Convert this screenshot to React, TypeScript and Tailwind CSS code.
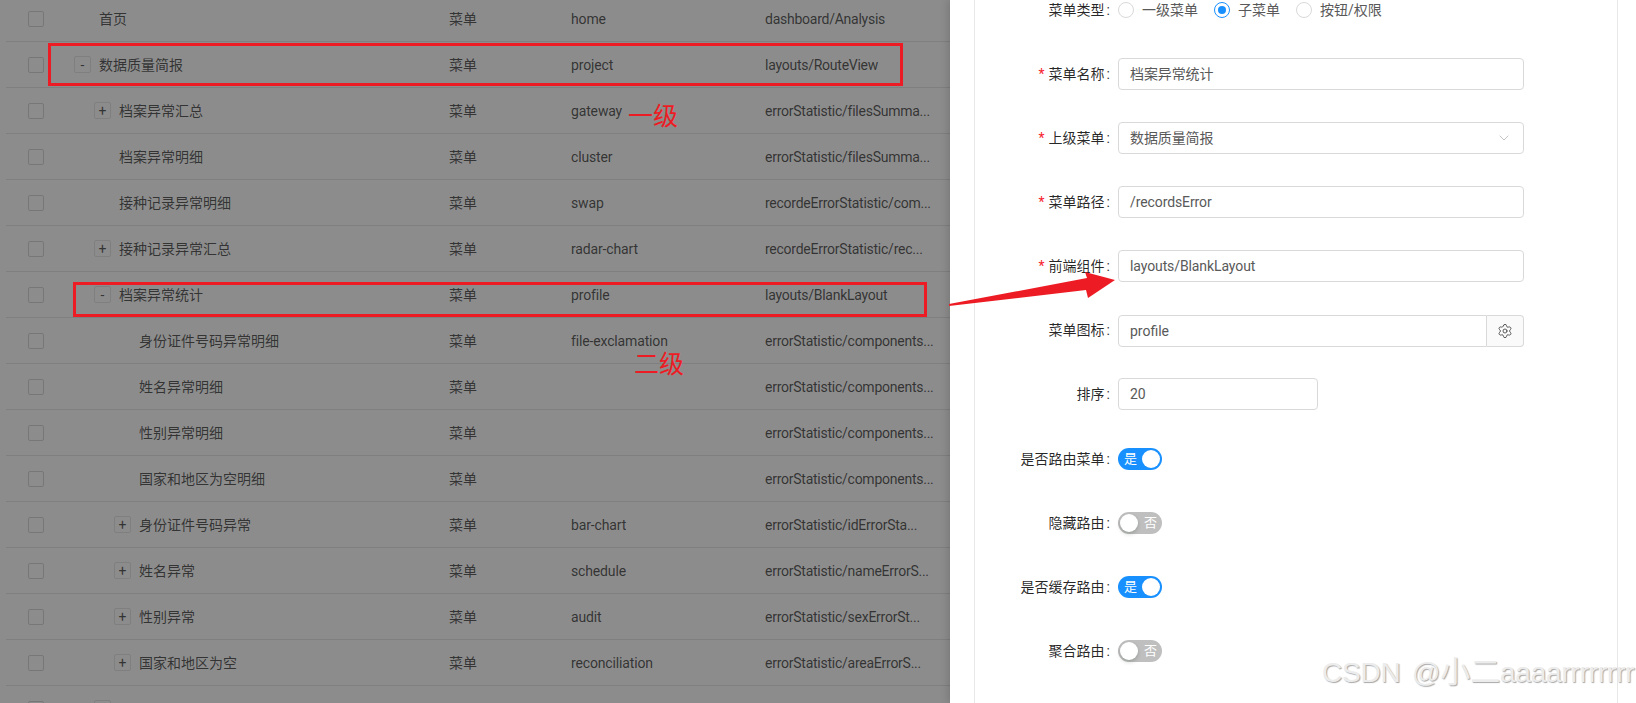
import React from "react";
import { ChevronDown, Settings } from "lucide-react";

type MenuRow = {
  name: string;
  level: number;
  expand?: string;
  icon: string;
  component: string;
};

const rows: MenuRow[] = [
  { name: "首页", level: 0, icon: "home", component: "dashboard/Analysis" },
  { name: "数据质量简报", level: 0, expand: "-", icon: "project", component: "layouts/RouteView" },
  { name: "档案异常汇总", level: 1, expand: "+", icon: "gateway", component: "errorStatistic/filesSumma..." },
  { name: "档案异常明细", level: 1, icon: "cluster", component: "errorStatistic/filesSumma..." },
  { name: "接种记录异常明细", level: 1, icon: "swap", component: "recordeErrorStatistic/com..." },
  { name: "接种记录异常汇总", level: 1, expand: "+", icon: "radar-chart", component: "recordeErrorStatistic/rec..." },
  { name: "档案异常统计", level: 1, expand: "-", icon: "profile", component: "layouts/BlankLayout" },
  { name: "身份证件号码异常明细", level: 2, icon: "file-exclamation", component: "errorStatistic/components..." },
  { name: "姓名异常明细", level: 2, icon: "", component: "errorStatistic/components..." },
  { name: "性别异常明细", level: 2, icon: "", component: "errorStatistic/components..." },
  { name: "国家和地区为空明细", level: 2, icon: "", component: "errorStatistic/components..." },
  { name: "身份证件号码异常", level: 2, expand: "+", icon: "bar-chart", component: "errorStatistic/idErrorSta..." },
  { name: "姓名异常", level: 2, expand: "+", icon: "schedule", component: "errorStatistic/nameErrorS..." },
  { name: "性别异常", level: 2, expand: "+", icon: "audit", component: "errorStatistic/sexErrorSt..." },
  { name: "国家和地区为空", level: 2, expand: "+", icon: "reconciliation", component: "errorStatistic/areaErrorS..." },
  // only the top of this row is on screen
  { name: "", level: 1, expand: " ", icon: "", component: "" },
];

function TableRow({ row }: { row: MenuRow }) {
  return (
    <div className="grid h-[46px] grid-cols-[68px_375px_122px_194px_185px] items-center border-b border-[#e8e8e8]">
      <div className="pl-[22px]">
        <div className="h-4 w-4 rounded-[2px] border border-[#d9d9d9] bg-white" />
      </div>
      <div className={`flex items-center ${row.level === 1 ? "pl-5" : row.level === 2 ? "pl-10" : ""}`}>
        {row.expand ? (
          <span className="mr-2 flex h-[17px] w-[17px] items-center justify-center rounded-[2px] border border-[#e8e8e8] text-sm leading-none">
            {row.expand}
          </span>
        ) : (
          <span className="mr-2 h-[17px] w-[17px]" />
        )}
        <span>{row.name}</span>
      </div>
      <div>{row.name ? "菜单" : ""}</div>
      <div className="tracking-[-0.15px]">{row.icon}</div>
      <div className="whitespace-nowrap tracking-[-0.25px]">{row.component}</div>
    </div>
  );
}

function FormRow({ label, required, children }: { label: string; required?: boolean; children: React.ReactNode }) {
  return (
    <div className="flex h-16 items-center">
      <div className="w-[143px] shrink-0 pr-[8px] text-right text-[rgba(0,0,0,0.85)]">
        {required && <span className="mr-1 text-[#f5222d]">*</span>}
        {label}
        <span className="ml-[2px]">:</span>
      </div>
      <div className="min-w-0 flex-1">{children}</div>
    </div>
  );
}

function Radio({ label, checked }: { label: string; checked?: boolean }) {
  return (
    <span className="mr-4 inline-flex items-center">
      <span
        className={`flex h-4 w-4 items-center justify-center rounded-full border bg-white ${
          checked ? "border-[#1890ff]" : "border-[#d9d9d9]"
        }`}
      >
        {checked && <span className="h-2 w-2 rounded-full bg-[#1890ff]" />}
      </span>
      <span className="ml-2 text-[#595959]">{label}</span>
    </span>
  );
}

function Switch({ on }: { on?: boolean }) {
  return (
    <div
      className={`flex h-[22px] w-11 items-center justify-between rounded-full px-[2px] text-[13px] text-white ${
        on ? "bg-[#1890ff]" : "bg-[#bfbfbf]"
      }`}
    >
      {on ? (
        <>
          <span className="pl-[4px]">是</span>
          <span className="h-[18px] w-[18px] rounded-full bg-white" />
        </>
      ) : (
        <>
          <span className="h-[18px] w-[18px] rounded-full bg-white shadow-[0_2px_4px_rgba(0,35,11,0.2)]" />
          <span className="pr-[3px]">否</span>
        </>
      )}
    </div>
  );
}

const inputClass = "flex h-8 items-center rounded border border-[#d9d9d9] bg-white px-[11px] text-[#595959] tracking-[-0.1px]";

export default function App() {
  return (
    <div className="relative flex h-[703px] w-[1636px] overflow-hidden bg-white font-['Roboto','Noto_Sans_CJK_SC',sans-serif] text-sm text-[rgba(0,0,0,0.65)]">
      {/* table behind the drawer mask */}
      <div className="relative h-full w-[950px] shrink-0 overflow-hidden">
        <div className="-mt-[4px] ml-[6px]">
          {rows.map((row, i) => (
            <TableRow key={i} row={row} />
          ))}
        </div>
        <div className="absolute inset-0 bg-[rgba(0,0,0,0.45)]" />
      </div>

      {/* drawer */}
      <div className="z-10 h-full flex-1 overflow-hidden bg-white pl-6 pr-[18px] shadow-[-2px_0_8px_rgba(0,0,0,0.15)]">
        <div className="h-full overflow-hidden border-x border-[#e8e8e8]">
          <div className="-mt-[22px] w-[552px]">
            <FormRow label="菜单类型">
              <div className="flex items-center">
                <Radio label="一级菜单" />
                <Radio label="子菜单" checked />
                <Radio label="按钮/权限" />
              </div>
            </FormRow>
            <FormRow label="菜单名称" required>
              <div className={`${inputClass} w-[406px]`}>档案异常统计</div>
            </FormRow>
            <FormRow label="上级菜单" required>
              <div className={`${inputClass} w-[406px] justify-between`}>
                <span>数据质量简报</span>
                <ChevronDown size={16} strokeWidth={1} className="text-[#a6a6a6]" />
              </div>
            </FormRow>
            <FormRow label="菜单路径" required>
              <div className={`${inputClass} w-[406px]`}>/recordsError</div>
            </FormRow>
            <FormRow label="前端组件" required>
              <div className={`${inputClass} w-[406px]`}>layouts/BlankLayout</div>
            </FormRow>
            <FormRow label="菜单图标">
              <div className="flex h-8 w-[406px] translate-y-px">
                <div className="flex flex-1 items-center rounded-l border border-[#d9d9d9] px-[11px] text-[#595959]">profile</div>
                <div className="flex w-[37px] items-center justify-center rounded-r border border-l-0 border-[#d9d9d9] bg-[#fafafa]">
                  <Settings size={16} strokeWidth={1.25} className="text-[#404040]" />
                </div>
              </div>
            </FormRow>
            <FormRow label="排序">
              <div className={`${inputClass} w-[200px]`}>20</div>
            </FormRow>
            <div className="mt-px">
              <FormRow label="是否路由菜单">
                <Switch on />
              </FormRow>
              <FormRow label="隐藏路由">
                <Switch />
              </FormRow>
              <FormRow label="是否缓存路由">
                <Switch on />
              </FormRow>
              <FormRow label="聚合路由">
                <Switch />
              </FormRow>
            </div>
          </div>
        </div>
      </div>

      {/* red annotations pasted on top of the screenshot */}
      <div className="absolute left-[48px] top-[43px] z-20 h-[43px] w-[855px] border-[3px] border-[#ed1c24]" />
      <div className="absolute left-[73px] top-[282px] z-20 h-[35px] w-[854px] border-[3px] border-[#ed1c24]" />
      <div className="absolute left-[628px] top-[102px] z-20 font-['Noto_Sans_CJK_SC',sans-serif] text-[25px] leading-[24px] text-[#ed1c24]">一级</div>
      <div className="absolute left-[634px] top-[350px] z-20 font-['Noto_Sans_CJK_SC',sans-serif] text-[25px] leading-[24px] text-[#ed1c24]">二级</div>
      <svg className="absolute left-0 top-0 z-20" width="1636" height="703">
        <polygon points="949,304 1087,278 1085,272 1115,280 1088,298 1086,290 949,306" fill="#ed1c24" />
      </svg>
      <div className="absolute left-[1322px] top-[654px] z-20 whitespace-nowrap font-['Liberation_Sans','Noto_Sans_CJK_SC',sans-serif] text-[28px] leading-[36px] tracking-[-0.2px] text-[#ececec] [word-spacing:4px] [text-shadow:1px_1px_1px_#a8a8a8]">
        CSDN @<span className="text-[30px]">小二</span>aaaarrrrrrrr
      </div>
    </div>
  );
}
